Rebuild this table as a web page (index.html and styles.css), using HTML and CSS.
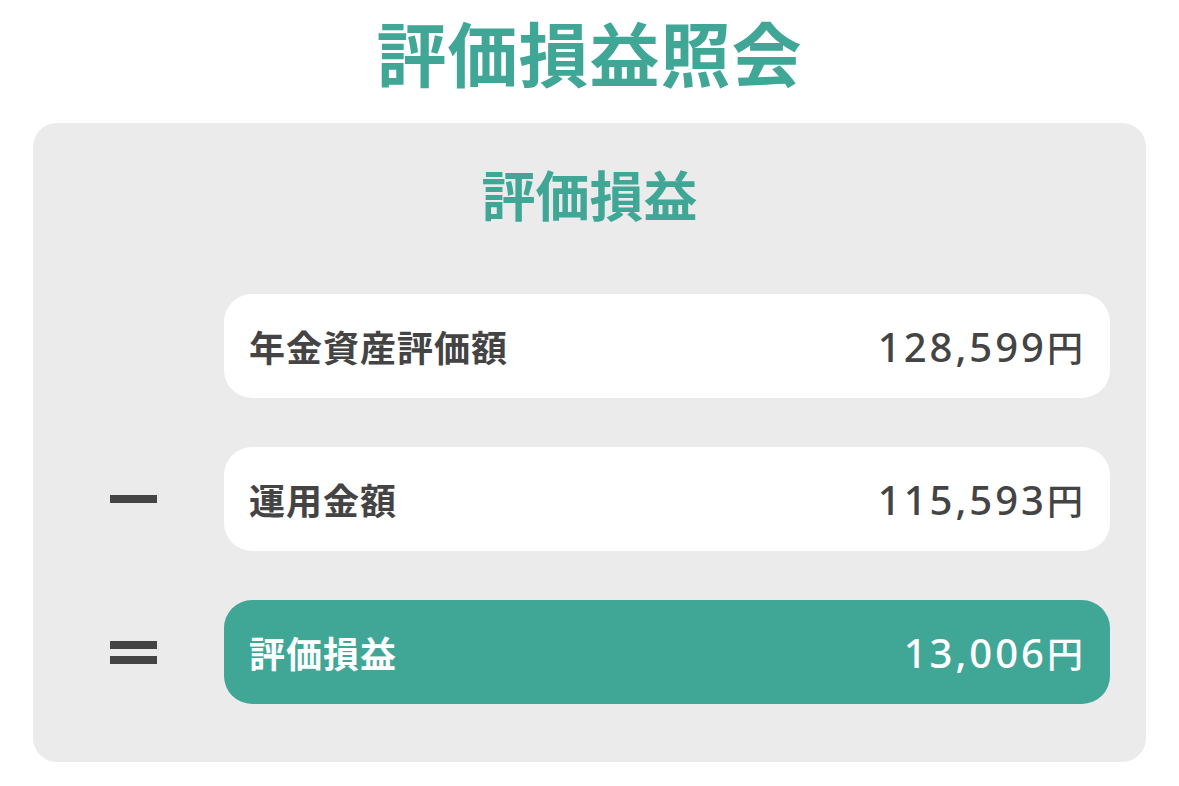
FILE: index.html
```html
<!DOCTYPE html>
<html lang="ja">
<head>
  <meta charset="UTF-8">
  <meta name="viewport" content="width=device-width, initial-scale=1.0">
  <title>評価損益照会</title>
  <link rel="stylesheet" href="styles.css">
</head>
<body>
  <h1 class="page-title">評価損益照会</h1>

  <section class="card">
    <h2 class="card-title">評価損益</h2>

    <div class="calc">
      <div class="sign"></div>
      <div class="row">
        <span class="label">年金資産評価額</span>
        <span class="amount">128,599<span class="yen">円</span></span>
      </div>

      <div class="sign"><span class="minus"></span></div>
      <div class="row">
        <span class="label">運用金額</span>
        <span class="amount">115,593<span class="yen">円</span></span>
      </div>

      <div class="sign"><span class="equals"></span></div>
      <div class="row result">
        <span class="label">評価損益</span>
        <span class="amount">13,006<span class="yen">円</span></span>
      </div>
    </div>
  </section>
</body>
</html>
```

FILE: styles.css
```css
body {
  margin: 0;
  padding: 0 33px;
  background-color: #fff;
  color: #444;
  font-family: "Noto Sans CJK JP", "Noto Sans", sans-serif;
}
.page-title {
  margin: 0;
  padding-top: 4px;
  font-size: 70px;
  line-height: 96px;
  font-weight: 700;
  text-align: center;
  color: #40a797;
  letter-spacing: 1px;
}
.card {
  margin-top: 23px;
  background-color: #ebebeb;
  border-radius: 24px;
  padding-bottom: 58px;
}
.card-title {
  margin: 0;
  padding: 31px 0 0;
  font-size: 54px;
  line-height: 80px;
  font-weight: 700;
  text-align: center;
  color: #40a797;
}
.calc {
  margin-top: 60px;
  padding-right: 36px;
  display: grid;
  grid-template-columns: 191px 1fr;
  row-gap: 49px;
}
.sign {
  display: flex;
  align-items: center;
  padding-left: 77px;
}
.minus {
  width: 47px;
  height: 8px;
  background-color: #444;
}
.equals {
  width: 47px;
  height: 7px;
  border-top: 8px solid #444;
  border-bottom: 8px solid #444;
}
.row {
  height: 104px;
  display: flex;
  align-items: center;
  justify-content: space-between;
  padding: 0 27px 0 25px;
  background-color: #fff;
  border-radius: 28px;
  font-size: 36px;
}
.label {
  font-weight: 700;
  letter-spacing: 1px;
}
.amount {
  font-family: "Noto Sans", "Noto Sans CJK JP", sans-serif;
  font-size: 40px;
  font-weight: 500;
  letter-spacing: 3px;
}
.yen {
  font-family: "Noto Sans CJK JP", sans-serif;
  font-size: 36px;
  letter-spacing: 0;
}
.row.result {
  background-color: #40a797;
  color: #fff;
}
```
